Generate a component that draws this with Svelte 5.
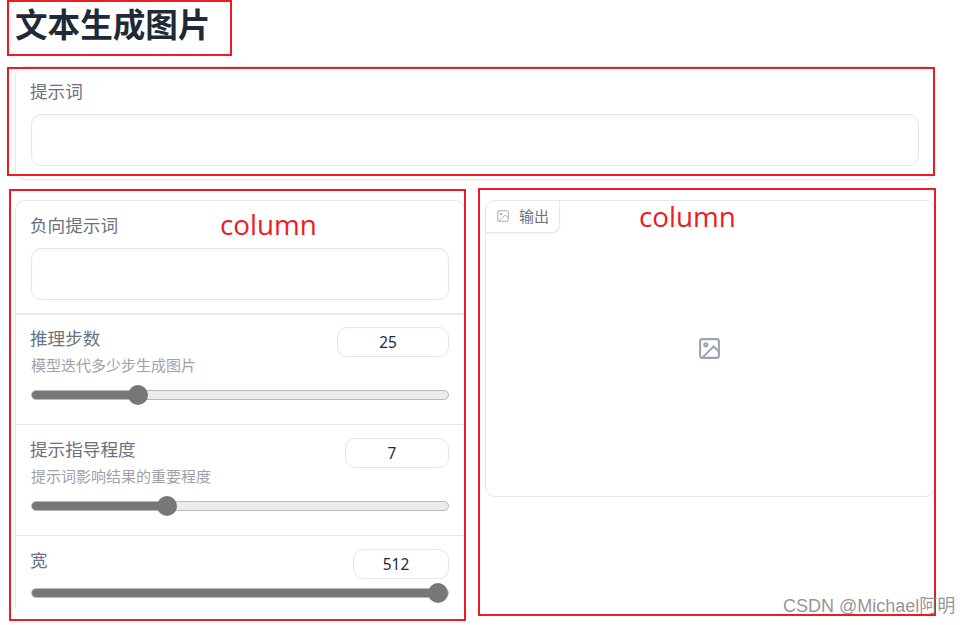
<script>
  const sliders = [
    { label: '推理步数', info: '模型迭代多少步生成图片', value: 25, min: 1, max: 100, box: 112 },
    { label: '提示指导程度', info: '提示词影响结果的重要程度', value: 7, min: 1, max: 20, box: 104 },
    { label: '宽', info: '', value: 512, min: 64, max: 512, box: 96 }
  ];
  const fill = (s) => (s.value - s.min) / (s.max - s.min);
</script>

<div class="page">
  <h1 class="title">文本生成图片</h1>

  <section class="card prompt">
    <div class="block">
      <label class="label" for="prompt">提示词</label>
      <textarea id="prompt" class="area"></textarea>
    </div>
  </section>

  <div class="columns">
    <section class="card left">
      <div class="block neg">
        <label class="label" for="neg">负向提示词</label>
        <textarea id="neg" class="area"></textarea>
      </div>
      {#each sliders as s}
        <div class="row">
          <div class="head">
            <div>
              <div class="label">{s.label}</div>
              {#if s.info}<div class="info">{s.info}</div>{/if}
            </div>
            <input class="num" type="text" value={s.value} style="width:{s.box}px" />
          </div>
          <input
            class="range"
            type="range"
            min={s.min}
            max={s.max}
            value={s.value}
            style="--p:{fill(s)}"
          />
        </div>
      {/each}
    </section>

    <section class="card right">
      <div class="tab">
        <svg class="tab-icon" viewBox="0 0 24 24" fill="none" stroke="currentColor" stroke-width="1.5" stroke-linecap="round" stroke-linejoin="round">
          <rect x="3" y="3" width="18" height="18" rx="2" /><circle cx="8.5" cy="8.5" r="1.5" /><polyline points="21 15 16 10 5 21" />
        </svg>
        <span>输出</span>
      </div>
      <div class="empty">
        <svg class="empty-icon" viewBox="0 0 24 24" fill="none" stroke="currentColor" stroke-width="2" stroke-linecap="round" stroke-linejoin="round">
          <rect x="3" y="3" width="18" height="18" rx="2" /><circle cx="8.5" cy="8.5" r="1.5" /><polyline points="21 15 16 10 5 21" />
        </svg>
      </div>
    </section>
  </div>

  <div class="mark m-title"></div>
  <div class="mark m-prompt"></div>
  <div class="mark m-left"></div>
  <div class="mark m-right"></div>
  <div class="col-word w-left">column</div>
  <div class="col-word w-right">column</div>
  <div class="watermark">CSDN @Michael阿明</div>
</div>

<style>
  :global(body) {
    margin: 0;
    background: #fff;
  }
  .page {
    position: relative;
    width: 971px;
    height: 625px;
    overflow: hidden;
    background: #fff;
    padding: 0 36px 0 15px;
    box-sizing: border-box;
    font-family: "Noto Sans", "Noto Sans CJK SC", sans-serif;
  }
  .title {
    margin: 0;
    height: 66px;
    padding-top: 3px;
    box-sizing: border-box;
    font-size: 32.6px;
    line-height: 44px;
    font-weight: 700;
    color: #1f2937;
  }
  .card {
    border: 1px solid #e5e7eb;
    border-radius: 10px;
    box-sizing: border-box;
    background: #fff;
  }
  .prompt {
    height: 114px;
    box-shadow: 0 1px 2px rgba(0, 0, 0, 0.05);
  }
  .block {
    padding: 13px 15px;
  }
  .neg {
    border-bottom: 2px solid #e5e7eb;
  }
  .label {
    display: block;
    margin: -1px 0 1px -1px;
    font-size: 17.6px;
    line-height: 24px;
    color: #6b7280;
  }
  .area {
    display: block;
    width: 100%;
    height: 52px;
    margin: 11px 0 0;
    box-sizing: border-box;
    resize: none;
    border: 1px solid #e5e7eb;
    border-radius: 10px;
    background: #fff;
    box-shadow: inset 0 2px 3px rgba(0, 0, 0, 0.03);
    outline: none;
  }
  .columns {
    display: grid;
    grid-template-columns: 1fr 1fr;
    gap: 20px;
    margin-top: 20px;
    align-items: start;
  }
  .left {
    height: 409px;
    overflow: hidden;
    border-bottom: none;
    border-bottom-left-radius: 0;
    border-bottom-right-radius: 0;
  }
  .row {
    padding: 13px 15px 19px;
    border-top: 1px solid #e5e7eb;
  }
  .neg + .row {
    padding-top: 12px;
    border-top: none;
  }
  .head {
    display: flex;
    justify-content: space-between;
    align-items: flex-start;
  }
  .info {
    margin-top: 4px;
    padding-bottom: 4px;
    font-size: 15px;
    line-height: 22px;
    color: #a1a1aa;
  }
  .num {
    height: 30px;
    margin-bottom: -1px;
    box-sizing: border-box;
    border: 1px solid #e5e7eb;
    border-radius: 10px;
    padding: 0 10px 0 0;
    text-align: center;
    font-family: "Noto Sans", sans-serif;
    font-size: 15.4px;
    color: #1f2937;
    outline: none;
    background: #fff;
    box-shadow: inset 0 1px 2px rgba(0, 0, 0, 0.02);
  }
  .range {
    -webkit-appearance: none;
    appearance: none;
    display: block;
    width: 100%;
    height: 20px;
    margin: 5px 0 0;
    background: transparent;
    outline: none;
  }
  .range::-webkit-slider-runnable-track {
    height: 10px;
    box-sizing: border-box;
    border: 1px solid #b9b9b9;
    border-radius: 5px;
    background: linear-gradient(
      to right,
      #777 calc(10px + (100% - 20px) * var(--p)),
      #ececec calc(10px + (100% - 20px) * var(--p))
    );
  }
  .range::-webkit-slider-thumb {
    -webkit-appearance: none;
    appearance: none;
    width: 20px;
    height: 20px;
    margin-top: -6px;
    border: none;
    border-radius: 50%;
    background: #777;
  }
  .right {
    position: relative;
    height: 297px;
    display: flex;
    flex-direction: column;
  }
  .tab {
    position: absolute;
    left: 0;
    top: 0;
    width: 74px;
    height: 32px;
    box-sizing: border-box;
    display: flex;
    align-items: center;
    gap: 9px;
    padding: 0 0 2px 10px;
    border-right: 1px solid #e5e7eb;
    border-bottom: 1px solid #e5e7eb;
    border-radius: 10px 0 8px 0;
    box-shadow: 0 1px 2px rgba(0, 0, 0, 0.05);
    font-size: 15px;
    color: #6b7280;
    background: #fff;
  }
  .tab-icon {
    width: 14px;
    height: 14px;
    flex: none;
    color: #a1a1aa;
  }
  .empty {
    flex: 1;
    display: flex;
    align-items: center;
    justify-content: center;
  }
  .empty-icon {
    width: 25px;
    height: 25px;
    color: #9ca3af;
    margin-left: -2px;
  }
  .mark {
    position: absolute;
    border: 2px solid #ed1c24;
    box-sizing: border-box;
    pointer-events: none;
  }
  .m-title {
    left: 7px;
    top: 0;
    width: 225px;
    height: 56px;
  }
  .m-prompt {
    left: 7px;
    top: 67px;
    width: 928px;
    height: 109px;
  }
  .m-left {
    left: 9px;
    top: 189px;
    width: 457px;
    height: 432px;
  }
  .m-right {
    left: 478px;
    top: 188px;
    width: 458px;
    height: 428px;
  }
  .col-word {
    position: absolute;
    font-family: "Open Sans", sans-serif;
    font-size: 27.8px;
    line-height: 36px;
    color: #ed1c24;
  }
  .w-left {
    left: 220px;
    top: 206px;
  }
  .w-right {
    left: 639px;
    top: 198px;
  }
  .watermark {
    position: absolute;
    left: 783px;
    top: 594px;
    font-family: "Liberation Sans", "Noto Sans CJK SC", sans-serif;
    font-size: 18px;
    line-height: 24px;
    color: rgba(130, 130, 130, 0.85);
    white-space: nowrap;
  }
</style>
